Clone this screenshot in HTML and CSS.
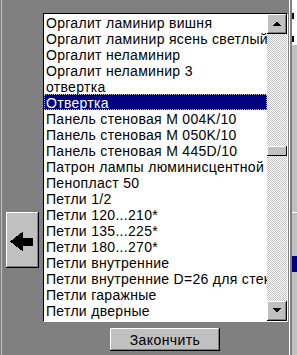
FILE: index.html
```html
<!DOCTYPE html>
<html lang="ru">
<head>
    <meta charset="UTF-8">
    <meta name="viewport" content="width=device-width, initial-scale=1.0">
    <title>Выбор товара</title>
    <link rel="stylesheet" href="styles.css">
</head>
<body>
<div class="screen">
    <div class="main">
        <div class="row">
            <div class="side">
                <button class="back-btn">
                    <svg width="33" height="56" viewBox="0 0 33 56" shape-rendering="crispEdges">
                        <polygon points="4,29.5 17,19.5 17,25.5 27,25.5 27,33.5 17,33.5 17,39.5" fill="#000"/>
                    </svg>
                </button>
            </div>
            <div class="listbox">
                <ul class="items">
                    <li>Оргалит ламинир вишня</li>
                    <li>Оргалит ламинир ясень светлый</li>
                    <li>Оргалит неламинир</li>
                    <li>Оргалит неламинир 3</li>
                    <li>отвертка</li>
                    <li class="selected">Отвертка</li>
                    <li>Панель стеновая М 004K/10</li>
                    <li>Панель стеновая М 050K/10</li>
                    <li>Панель стеновая М 445D/10</li>
                    <li>Патрон лампы люминисцентной</li>
                    <li>Пенопласт 50</li>
                    <li>Петли 1/2</li>
                    <li>Петли 120...210*</li>
                    <li>Петли 135...225*</li>
                    <li>Петли 180...270*</li>
                    <li>Петли внутренние</li>
                    <li>Петли внутренние D=26 для стекла</li>
                    <li>Петли гаражные</li>
                    <li>Петли дверные</li>
                </ul>
                <div class="scrollbar">
                    <div class="sb-btn">
                        <svg width="20" height="20" viewBox="0 0 20 20" shape-rendering="crispEdges">
                            <polygon points="5,12 14,12 9.5,7.5" fill="#000"/>
                        </svg>
                    </div>
                    <div class="sb-track">
                        <div class="sb-thumb"></div>
                    </div>
                    <div class="sb-btn">
                        <svg width="20" height="20" viewBox="0 0 20 20" shape-rendering="crispEdges">
                            <polygon points="5,7 14,7 9.5,11.5" fill="#000"/>
                        </svg>
                    </div>
                </div>
            </div>
        </div>
        <div class="actions">
            <button class="finish-btn">Закончить</button>
        </div>
    </div>
    <div class="edge">
        <div class="edge-panel">
            <div class="edge-top">
                <span class="mark mark-1"></span>
                <span class="mark mark-2"></span>
            </div>
            <div class="edge-line"></div>
            <div class="edge-sel"></div>
        </div>
    </div>
</div>
</body>
</html>
```

FILE: styles.css
```css
body {
    margin: 0;
    background: #808080;
    font-family: "Liberation Sans", Arial, sans-serif;
    font-size: 14px;
    color: #000;
}
.screen {
    display: flex;
    height: 355px;
    overflow: hidden;
}
.main {
    width: 288px;
    margin-left: 1px;
    border-left: 1px solid #c0c0c0;
    padding-top: 13px;
    box-sizing: border-box;
    flex: none;
}
.row {
    display: flex;
}
.side {
    width: 41px;
    flex: none;
}
.back-btn {
    display: block;
    width: 33px;
    height: 56px;
    margin: 199px 0 0 4px;
    padding: 0;
    border: none;
    background: #c0c0c0;
    box-shadow: inset -1px -1px #000, inset 1px 1px #fff, inset -2px -2px #808080;
}
.back-btn svg {
    display: block;
}
.listbox {
    display: flex;
    width: 245px;
    height: 309px;
    box-sizing: border-box;
    border: 1px solid;
    border-color: #000 #fff #fff #000;
    flex: none;
}
.items {
    width: 223px;
    height: 307px;
    margin: 0;
    padding: 0;
    list-style: none;
    background: #fff;
    overflow: hidden;
    flex: none;
}
.items li {
    height: 16px;
    line-height: 16px;
    padding: 1px 0 0 2px;
    box-sizing: border-box;
    white-space: nowrap;
    letter-spacing: 0.3px;
}
.items li.selected {
    background: #000080;
    color: #fff;
    outline: 1px dotted #c0c0c0;
    outline-offset: -1px;
}
.scrollbar {
    width: 20px;
    display: flex;
    flex-direction: column;
    background: repeating-conic-gradient(#c0c0c0 0 25%, #fff 0 50%) 0 0 / 2px 2px;
}
.sb-btn {
    height: 20px;
    flex: none;
    background: #c0c0c0;
    box-shadow: inset -1px -1px #000, inset 1px 1px #fff, inset -2px -2px #808080;
}
.sb-btn svg {
    display: block;
}
.sb-track {
    flex: 1;
}
.sb-thumb {
    height: 10px;
    margin-top: 112px;
    background: #c0c0c0;
    box-shadow: inset -1px -1px #000, inset 1px 1px #fff;
}
.actions {
    padding: 6px 0 0 108px;
}
.finish-btn {
    display: block;
    width: 110px;
    height: 23px;
    padding: 0;
    border: none;
    background: #c0c0c0;
    box-shadow: inset -1px -1px #000, inset 1px 1px #fff, inset -2px -2px #808080;
    font-family: "Liberation Sans", Arial, sans-serif;
    font-size: 14px;
    color: #000;
    letter-spacing: 0.4px;
}
.edge {
    flex: 1;
    border-left: 1px solid #fff;
    padding-left: 2px;
}
.edge-panel {
    height: 100%;
    background: #c0c0c0;
    display: flex;
    flex-direction: column;
}
.edge-top {
    height: 45px;
    background: #fff;
    position: relative;
}
.mark {
    position: absolute;
    left: 0;
    width: 2px;
    height: 6px;
    background: #000;
}
.mark-1 {
    top: 13px;
}
.mark-2 {
    top: 36px;
}
.edge-line {
    height: 1px;
    margin-top: 167px;
    background: #fff;
}
.edge-sel {
    height: 16px;
    margin-top: 43px;
    background: #000080;
}
```
